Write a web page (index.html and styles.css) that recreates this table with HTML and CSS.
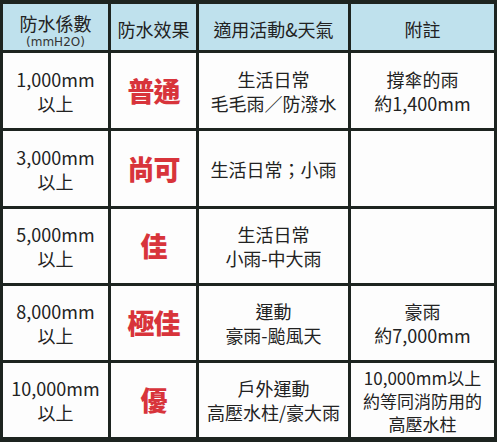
FILE: index.html
```html
<!DOCTYPE html>
<html lang="zh-Hant">
<head>
<meta charset="utf-8">
<title>防水係數</title>
<link rel="stylesheet" href="styles.css">
</head>
<body>
<table class="wp-table">
  <colgroup>
    <col class="c1"><col class="c2"><col class="c3"><col class="c4">
  </colgroup>
  <thead>
    <tr class="head-row">
      <th class="h-first"><div class="h-main">防水係數</div><div class="h-sub">(mmH2O)</div></th>
      <th>防水效果</th>
      <th>適用活動&amp;天氣</th>
      <th>附註</th>
    </tr>
  </thead>
  <tbody>
    <tr class="r1">
      <td>1,000mm<br>以上</td>
      <td class="grade">普通</td>
      <td>生活日常<br>毛毛雨／防潑水</td>
      <td>撐傘的雨<br>約1,400mm</td>
    </tr>
    <tr class="r2">
      <td>3,000mm<br>以上</td>
      <td class="grade">尚可</td>
      <td>生活日常；小雨</td>
      <td></td>
    </tr>
    <tr class="r3">
      <td>5,000mm<br>以上</td>
      <td class="grade">佳</td>
      <td>生活日常<br>小雨-中大雨</td>
      <td></td>
    </tr>
    <tr class="r4">
      <td>8,000mm<br>以上</td>
      <td class="grade">極佳</td>
      <td>運動<br>豪雨-颱風天</td>
      <td>豪雨<br>約7,000mm</td>
    </tr>
    <tr class="r5">
      <td>10,000mm<br>以上</td>
      <td class="grade">優</td>
      <td>戶外運動<br>高壓水柱/豪大雨</td>
      <td class="small">10,000mm以上<br>約等同消防用的<br>高壓水柱</td>
    </tr>
  </tbody>
</table>
</body>
</html>
```

FILE: styles.css
```css
html, body {
  margin: 0;
  padding: 0;
  background: #1d2420;
}

.wp-table {
  width: 497px;
  table-layout: fixed;
  border-collapse: separate;
  border-spacing: 3px;
  border-top: 1px solid #1d2420;
  background: #1d2420;
  font-family: "Noto Sans CJK TC", "Noto Sans", sans-serif;
  color: #222;
}

.c1 { width: 105px; }
.c2 { width: 85px; }
.c3 { width: 149px; }
.c4 { width: 143px; }

.wp-table th,
.wp-table td {
  padding: 0;
  text-align: center;
  vertical-align: middle;
  font-size: 18px;
  line-height: 24px;
  font-weight: 400;
  background: #fdfdfd;
  overflow: hidden;
}

.wp-table th {
  background: #bfe1ed;
  height: 46px;
  padding-top: 4px;
  box-sizing: border-box;
}

.wp-table th.h-first {
  vertical-align: top;
  padding-top: 7px;
}

.h-main {
  line-height: 24px;
}

.h-sub {
  font-size: 12px;
  line-height: 14px;
  font-family: "DejaVu Sans", sans-serif;
  color: #333;
}

.r1 td, .r2 td { height: 75px; }
.r3 td, .r4 td { height: 74px; }
.r5 td { height: 74px; }

.wp-table td.grade {
  color: #d8343b;
  font-size: 27px;
  font-weight: 900;
  letter-spacing: -1px;
}

.wp-table td.small {
  font-size: 17px;
  line-height: 23px;
}
```
